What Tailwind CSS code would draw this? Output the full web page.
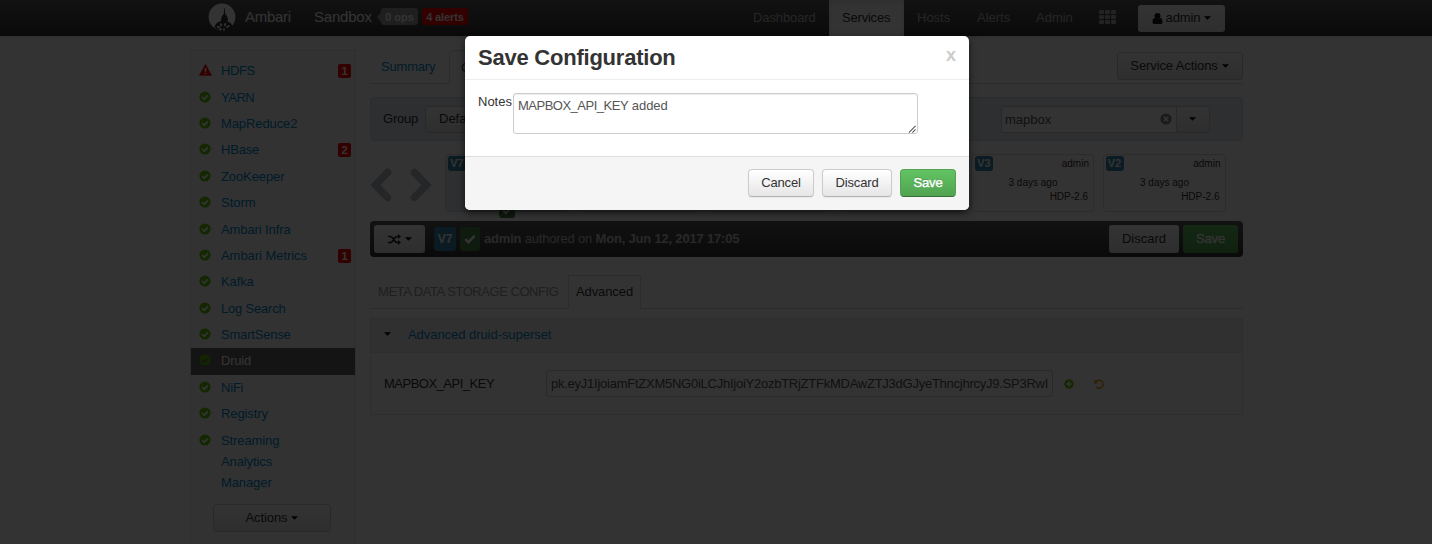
<!DOCTYPE html>
<html lang="en">
<head>
<meta charset="utf-8">
<title>Ambari - Sandbox</title>
<script src="https://cdn.jsdelivr.net/npm/@tailwindcss/browser@4"></script>
</head>
<body class="relative h-[544px] w-[1432px] overflow-hidden bg-white text-[13px] leading-[20px] text-[#333] font-['Liberation_Sans',Arial,sans-serif]">
<svg class="hidden">
  <symbol id="ok" viewBox="0 0 12 12"><circle cx="6" cy="6" r="5.6" fill="#5fc400"/><path d="M3.1 6.1l2.1 2.1L9 4.4" fill="none" stroke="#fff" stroke-width="1.7"/></symbol>
  <symbol id="warn" viewBox="0 0 13 12"><path d="M6.5.3L12.8 11.6H.2z" fill="#f00" stroke="#f00" stroke-width=".4" stroke-linejoin="round"/><path d="M6.5 4v3.8M6.5 8.8v1.5" stroke="#fff" stroke-width="1.6"/></symbol>
  <symbol id="caret" viewBox="0 0 8 4"><path d="M0 0h8L4 4z" fill="#000"/></symbol>
  <symbol id="check" viewBox="0 0 12 10"><path d="M1.3 5.2l3.2 3L10.6 1.8" fill="none" stroke="#fff" stroke-width="2.5"/></symbol>
</svg>

<header class="flex h-9 items-center bg-gradient-to-b from-[#5a5a5a] to-[#333] pl-[208px] shadow">
  <svg class="-mt-[3px] h-7 w-7 shrink-0" viewBox="0 0 28 28"><circle cx="14" cy="14" r="13.4" fill="#fff"/><path d="M16.200 5h.6l.4 6c2 1.600 2.600 3.500 2.800 7h-7c.2-3.500.8-5.400 2.800-7z" fill="#333"/><path d="M6.500 24.500c.5-4 4.500-6.700 9.500-6.700 4 0 7.500 2.200 8.500 5.700l-2.500 3-5 1.500h-5z" fill="#333"/><path d="M9 23.500l3 1.200M12.500 20.500l1 2.600M17.500 20.300l-.8 2.700M21.500 22.700l-3 1.500M11.500 27l2-1.500M16 27.500v-2" stroke="#fff" stroke-width="1.800" fill="none"/></svg>
  <span class="ml-[9px] w-[69px] -mt-[2px] text-[15px] text-white tracking-[-0.3px]">Ambari</span>
  <span class="w-[63px] -mt-[2px] text-[15px] text-white tracking-[-0.2px]">Sandbox</span>
  <div class="-mt-[3px] flex items-center">
    <span class="h-0 w-0 border-y-[5px] border-r-[4px] border-y-transparent border-r-[#999]"></span>
    <span class="h-[17px] w-[37px] rounded-[3px] bg-[#999] text-center text-[11px] font-bold leading-[18px] text-white">0 ops</span>
    <span class="ml-1 h-[17px] w-[46px] rounded-[3px] bg-[#f00] text-center text-[11px] font-bold leading-[18px] tracking-[-0.1px] text-white">4 alerts</span>
  </div>
  <nav class="ml-[272px] flex h-full text-[#bbb] leading-[36px]">
    <a class="w-[89px] pl-[13px] tracking-[-0.1px]">Dashboard</a>
    <a class="w-[75px] bg-white pl-[13px] text-[#333] shadow-[inset_0_2px_5px_#00000020] tracking-[-0.2px]">Services</a>
    <a class="w-[60px] pl-[13px]">Hosts</a>
    <a class="w-[59px] pl-[13px]">Alerts</a>
    <a class="w-[63px] pl-[13px]">Admin</a>
  </nav>
  <div class="ml-[13px] -mt-[3px] grid grid-cols-[5px_5px_5px] gap-x-px gap-y-px">
    <i class="h-[4px] rounded-[1px] bg-[#b0b0b0]"></i><i class="h-[4px] rounded-[1px] bg-[#b0b0b0]"></i><i class="h-[4px] rounded-[1px] bg-[#b0b0b0]"></i>
    <i class="h-[4px] rounded-[1px] bg-[#b0b0b0]"></i><i class="h-[4px] rounded-[1px] bg-[#b0b0b0]"></i><i class="h-[4px] rounded-[1px] bg-[#b0b0b0]"></i>
    <i class="h-[4px] rounded-[1px] bg-[#b0b0b0]"></i><i class="h-[4px] rounded-[1px] bg-[#b0b0b0]"></i><i class="h-[4px] rounded-[1px] bg-[#b0b0b0]"></i>
  </div>
  <button class="ml-[22px] mt-px flex h-[27px] w-[87px] items-center justify-center rounded-[3px] bg-gradient-to-b from-white to-[#e6e6e6] pb-px">
    <svg class="mr-[3px] h-[11px] w-[11px]" viewBox="0 0 10 11"><circle cx="5" cy="3" r="3" fill="#111"/><path d="M0 9c0-3 1-4 2.400-4 1.500 1.300 3.700 1.300 5.200 0C9 5 10 6 10 9c0 1.500-.7 2-2 2H2C.7 11 0 10.500 0 9z" fill="#111"/></svg>
    <span class="tracking-[-0.1px]">admin</span><svg class="ml-1 h-1 w-[7px]"><use href="#caret"/></svg>
  </button>
</header>

<div class="flex pl-[190px] pt-[14px]">
  <aside class="h-[510px] w-[166px] shrink-0 border border-[#e3e3e3] bg-[#fafafa] pt-[7px] text-[#08c]">
    <div class="flex h-[26.400px] items-center pl-2"><svg class="-mt-[2px] h-3 w-[13px]"><use href="#warn"/></svg><span class="ml-[9px] flex-1 tracking-[-0.4px]">HDFS</span><b class="mr-1 h-[14px] w-[13px] rounded-[2px] bg-[#f00] text-center text-[11px] leading-[14px] text-white">1</b></div>
    <div class="flex h-[26.400px] items-center pl-2"><svg class="-mt-[2px] h-3 w-3"><use href="#ok"/></svg><span class="ml-[10px] tracking-[-0.500px]">YARN</span></div>
    <div class="flex h-[26.400px] items-center pl-2"><svg class="-mt-[2px] h-3 w-3"><use href="#ok"/></svg><span class="ml-[10px] tracking-[-0.100px]">MapReduce2</span></div>
    <div class="flex h-[26.400px] items-center pl-2"><svg class="-mt-[2px] h-3 w-3"><use href="#ok"/></svg><span class="ml-[10px] flex-1 tracking-[-0.2px]">HBase</span><b class="mr-1 h-[14px] w-[13px] rounded-[2px] bg-[#f00] text-center text-[11px] leading-[14px] text-white">2</b></div>
    <div class="flex h-[26.400px] items-center pl-2"><svg class="-mt-[2px] h-3 w-3"><use href="#ok"/></svg><span class="ml-[10px] tracking-[-0.100px]">ZooKeeper</span></div>
    <div class="flex h-[26.400px] items-center pl-2"><svg class="-mt-[2px] h-3 w-3"><use href="#ok"/></svg><span class="ml-[10px]">Storm</span></div>
    <div class="flex h-[26.400px] items-center pl-2"><svg class="-mt-[2px] h-3 w-3"><use href="#ok"/></svg><span class="ml-[10px] tracking-[-0.100px]">Ambari Infra</span></div>
    <div class="flex h-[26.400px] items-center pl-2"><svg class="-mt-[2px] h-3 w-3"><use href="#ok"/></svg><span class="ml-[10px] flex-1 tracking-[-0.050px]">Ambari Metrics</span><b class="mr-1 h-[14px] w-[13px] rounded-[2px] bg-[#f00] text-center text-[11px] leading-[14px] text-white">1</b></div>
    <div class="flex h-[26.400px] items-center pl-2"><svg class="-mt-[2px] h-3 w-3"><use href="#ok"/></svg><span class="ml-[10px] tracking-[-0.100px]">Kafka</span></div>
    <div class="flex h-[26.400px] items-center pl-2"><svg class="-mt-[2px] h-3 w-3"><use href="#ok"/></svg><span class="ml-[10px] tracking-[-0.200px]">Log Search</span></div>
    <div class="flex h-[26.400px] items-center pl-2"><svg class="-mt-[2px] h-3 w-3"><use href="#ok"/></svg><span class="ml-[10px] tracking-[-0.200px]">SmartSense</span></div>
    <div class="flex h-[26.400px] items-center bg-[#666] pl-2 text-white"><svg class="-mt-[2px] h-3 w-3" viewBox="0 0 12 12"><circle cx="6" cy="6" r="5.600" fill="#5ab400"/><path d="M3.100 6.100l2.100 2.100L9 4.400" fill="none" stroke="#666" stroke-width="1.700"/></svg><span class="ml-[10px] tracking-[-0.200px]">Druid</span></div>
    <div class="flex h-[26.400px] items-center pl-2"><svg class="-mt-[2px] h-3 w-3"><use href="#ok"/></svg><span class="ml-[10px] tracking-[-0.200px]">NiFi</span></div>
    <div class="flex h-[26.400px] items-center pl-2"><svg class="-mt-[2px] h-3 w-3"><use href="#ok"/></svg><span class="ml-[10px] tracking-[-0.100px]">Registry</span></div>
    <div class="flex items-start pl-2 pt-[3px]"><svg class="mt-1 h-3 w-3"><use href="#ok"/></svg><span class="ml-[10px] leading-[21px] tracking-[-0.100px]">Streaming<br>Analytics<br>Manager</span></div>
    <button class="ml-[22px] mt-[11px] flex h-7 w-[118px] items-center justify-center rounded-[3px] border border-[#ccc] bg-gradient-to-b from-white to-[#e6e6e6] pb-px tracking-[-0.100px] text-[#333]">Actions<svg class="ml-1 h-1 w-[7px]"><use href="#caret"/></svg></button>
  </aside>

  <main class="ml-[14px] w-[873px] shrink-0">
    <div class="flex h-[34px] border-b border-[#ddd]">
      <a class="w-[79px] pl-[11px] leading-[33px] text-[#08c] tracking-[-0.200px]">Summary</a>
      <a class="h-[34px] w-[75px] rounded-t border border-b-0 border-[#ddd] bg-white pl-[11px] leading-[33px] text-[#555]">Configs</a>
      <button class="ml-auto mt-[2px] flex h-7 w-[126px] items-center justify-center rounded-[3px] border border-[#ccc] bg-gradient-to-b from-white to-[#e6e6e6] pb-px pr-px tracking-[-0.1px]">Service Actions<svg class="ml-1 h-1 w-[7px]"><use href="#caret"/></svg></button>
    </div>
    <div class="mt-[13px] flex h-11 items-center rounded border border-[#d3d9de] bg-[#e4ebf2] pl-3">
      <span class="w-[42px] tracking-[-0.2px]">Group</span>
      <button class="h-[27px] w-[120px] rounded-[3px] border border-[#ccc] bg-gradient-to-b from-white to-[#e6e6e6] pl-[13px] text-left">Default (3)</button>
      <div class="ml-auto mr-8 flex h-[27px]">
        <div class="flex w-[176px] items-center rounded-l-[3px] border border-[#ccc] bg-white pl-[3px] pr-[4px] pt-px text-[#555]"><span class="flex-1">mapbox</span>
          <svg class="-mt-px h-3 w-3" viewBox="0 0 12 12"><circle cx="6" cy="6" r="5.600" fill="#888"/><path d="M3.800 3.800l4.400 4.400M8.200 3.800L3.800 8.200" stroke="#fff" stroke-width="1.600"/></svg></div>
        <div class="-ml-px flex w-[34px] items-center justify-center rounded-r-[3px] border border-[#ccc] bg-gradient-to-b from-white to-[#e6e6e6] pr-px"><svg class="h-1 w-[7px]"><use href="#caret"/></svg></div>
      </div>
    </div>
    <div class="mt-[13px] flex h-[58px]">
      <svg class="mt-[14px] h-[34px] w-[62px] shrink-0" viewBox="0 0 62 34"><path d="M17.500 4.500L5.500 17l12 12.500M44.500 4.500L56.500 17l-12 12.500" fill="none" stroke="#b4bdc5" stroke-width="7.500" stroke-linecap="round" stroke-linejoin="miter"/></svg>
      <div class="ml-[13px] flex gap-[8.500px] text-[11px]">
        <div class="relative w-[123px] rounded border border-[#d3d9de] bg-[#e4ebf2]"><b class="mt-px ml-[2px] block h-[15px] w-[18px] rounded-[3px] bg-[#3a87ad] text-center leading-[15px] text-white">V7</b><i class="absolute left-[53px] top-[48px] flex h-[15px] w-4 items-center justify-center rounded-[3px] bg-[#468847]"><svg class="h-[9px] w-[10px]"><use href="#check"/></svg></i></div>
        <div class="w-[123px] rounded border border-[#ddd]"></div>
        <div class="w-[123px] rounded border border-[#ddd]"></div>
        <div class="w-[123px] rounded border border-[#ddd]"></div>
        <div class="w-[123px] rounded border border-[#ddd]"><div class="flex justify-between pl-[3px] pr-1 pt-px"><b class="h-[15px] w-[18px] rounded-[3px] bg-[#3a87ad] text-center leading-[15px] text-white">V3</b><span class="text-[10px] leading-[16px]">admin</span></div><div class="mt-[3px] pl-px text-center text-[10px] leading-[16px]">3 days ago</div><div class="pr-[5px] text-right text-[10px] leading-[12px]">HDP-2.6</div></div>
        <div class="w-[123px] rounded border border-[#ddd]"><div class="flex justify-between pl-[2px] pr-1 pt-px"><b class="h-[15px] w-[18px] rounded-[3px] bg-[#3a87ad] text-center leading-[15px] text-white">V2</b><span class="text-[10px] leading-[16px]">admin</span></div><div class="mt-[3px] pl-px text-center text-[10px] leading-[16px]">3 days ago</div><div class="pr-[5px] text-right text-[10px] leading-[12px]">HDP-2.6</div></div>
      </div>
    </div>
    <div class="mt-[9px] flex h-9 items-center rounded bg-gradient-to-b from-[#5a5a5a] to-[#333] pl-1 pr-[5px] text-[#c8c8c8]">
      <button class="flex h-7 w-[51px] items-center justify-center rounded-[3px] bg-gradient-to-b from-white to-[#e6e6e6] text-[#333]"><svg class="h-[11px] w-[13px]" viewBox="0 0 13 11"><path d="M0 2.500h2.500C5.500 2.500 6 8.500 9 8.500h2M0 8.500h2.500C5.500 8.500 6 2.500 9 2.500h2" fill="none" stroke="#222" stroke-width="1.600"/><path d="M10 0l3 2.500L10 5zM10 6l3 2.500-3 2.500z" fill="#222"/></svg><svg class="ml-1 h-1 w-[7px]"><use href="#caret"/></svg></button>
      <b class="ml-[9px] h-6 w-[22px] rounded-[3px] bg-[#3a87ad] text-center text-[12px] leading-6 text-white">V7</b>
      <i class="ml-1 flex h-6 w-5 items-center justify-center rounded-[3px] bg-[#468847]"><svg class="h-[10px] w-3"><use href="#check"/></svg></i>
      <span class="ml-1 tracking-[-0.19px]"><b>admin</b> authored on <b>Mon, Jun 12, 2017 17:05</b></span>
      <button class="ml-auto h-7 w-[70px] rounded-[3px] bg-gradient-to-b from-white to-[#e6e6e6] text-[#333]">Discard</button>
      <button class="ml-1 h-7 w-[55px] rounded-[3px] bg-gradient-to-b from-[#62c462] to-[#51a351] tracking-[-0.2px] text-white [-webkit-text-stroke:0.3px_white]">Save</button>
    </div>
    <div class="mt-[18px] flex h-[34px] border-b border-[#ddd]">
      <a class="w-[198px] whitespace-nowrap pl-2 leading-[33px] tracking-[-0.45px] text-[#999]">META DATA STORAGE CONFIG</a>
      <a class="h-[34px] w-[73px] border border-b-0 border-[#ddd] bg-white pl-[7px] leading-[32px] tracking-[-0.1px] text-[#333]">Advanced</a>
    </div>
    <div class="mt-[9px] h-[97px] border border-[#e5e5e5]">
      <div class="flex h-[34px] items-center border-b border-[#e5e5e5] bg-[#f0f0f0] pb-[2px] pl-[13px]"><svg class="-mt-px mr-[17px] h-1 w-[7px]"><use href="#caret"/></svg><span class="text-[#08c] tracking-[-0.050px]">Advanced druid-superset</span></div>
      <div class="flex h-[61px] items-center pl-[13px]">
        <span class="w-[162px] tracking-[-0.5px]">MAPBOX_API_KEY</span>
        <div class="h-[27px] w-[507px] rounded-[3px] border border-[#ccc] px-1 leading-[25px] text-[#555]"><div class="overflow-hidden whitespace-nowrap tracking-[-0.25px]">pk.eyJ1IjoiamFtZXM5NG0iLCJhIjoiY2ozbTRjZTFkMDAwZTJ3dGJyeThncjhrcyJ9.SP3RwI</div></div>
        <svg class="ml-[11px] h-[10px] w-[10px]" viewBox="0 0 10 10"><circle cx="5" cy="5" r="4.700" fill="#5fc400"/><path d="M5 2.300v5.400M2.300 5h5.400" stroke="#fff" stroke-width="1.700"/></svg>
        <svg class="ml-5 h-[10px] w-[10px]" viewBox="0 0 10 10"><path d="M1.800 2.800A4 4 0 1 1 2 7.800" fill="none" stroke="#e89a10" stroke-width="1.500"/><path d="M0 .3v4.200h4.200z" fill="#e89a10"/></svg>
      </div>
    </div>
  </main>
</div>

<div class="absolute inset-0 bg-black/80"></div>
<section class="absolute left-[465px] top-[36px] flex h-[174px] w-[504px] flex-col overflow-hidden rounded-[5px] bg-white shadow-[0_3px_7px_rgba(0,0,0,0.6)]">
  <div class="flex h-11 shrink-0 justify-between border-b border-[#eee] px-[13px]">
    <h3 class="text-[22px] font-bold leading-[43px] tracking-[-0.23px]">Save Configuration</h3>
    <b class="text-[18px] leading-[39px] text-[#ccc]">x</b>
  </div>
  <div class="flex flex-1 pl-[13px] pt-[13px]">
    <label class="w-[35px] leading-[18px]">Notes</label>
    <div class="flex h-[41px] w-[405px] rounded-[3px] border border-[#ccc] pl-1 pt-[2px] text-[#555] shadow-[inset_0_1px_1px_#00000013]"><span class="flex-1"><span class="tracking-[-0.5px]">MAPBOX_API_KEY</span> added</span><svg class="mr-px h-[8px] w-[8px] self-end" viewBox="0 0 9 9"><path d="M1 8.500L8.500 1M5 8.500L8.500 5" stroke="#555" stroke-width="1.200"/></svg></div>
  </div>
  <div class="flex h-[54px] shrink-0 justify-end gap-2 border-t border-[#ddd] bg-[#f5f5f5] pr-[13px] pt-3">
    <button class="h-7 w-[66px] rounded-[4px] border border-[#ccc] border-b-[#b3b3b3] bg-gradient-to-b from-white to-[#e6e6e6] shadow-[0_1px_2px_#0000000d] tracking-[-0.150px]">Cancel</button>
    <button class="h-7 w-[70px] rounded-[4px] border border-[#ccc] border-b-[#b3b3b3] bg-gradient-to-b from-white to-[#e6e6e6] shadow-[0_1px_2px_#0000000d] tracking-[-0.150px]">Discard</button>
    <button class="h-7 w-14 rounded-[4px] border border-[#51a351] border-b-[#387038] bg-gradient-to-b from-[#62c462] to-[#51a351] text-white tracking-[-0.2px] [-webkit-text-stroke:0.4px_white] [text-shadow:0_-1px_0_#00000040]">Save</button>
  </div>
</section>
</body>
</html>
